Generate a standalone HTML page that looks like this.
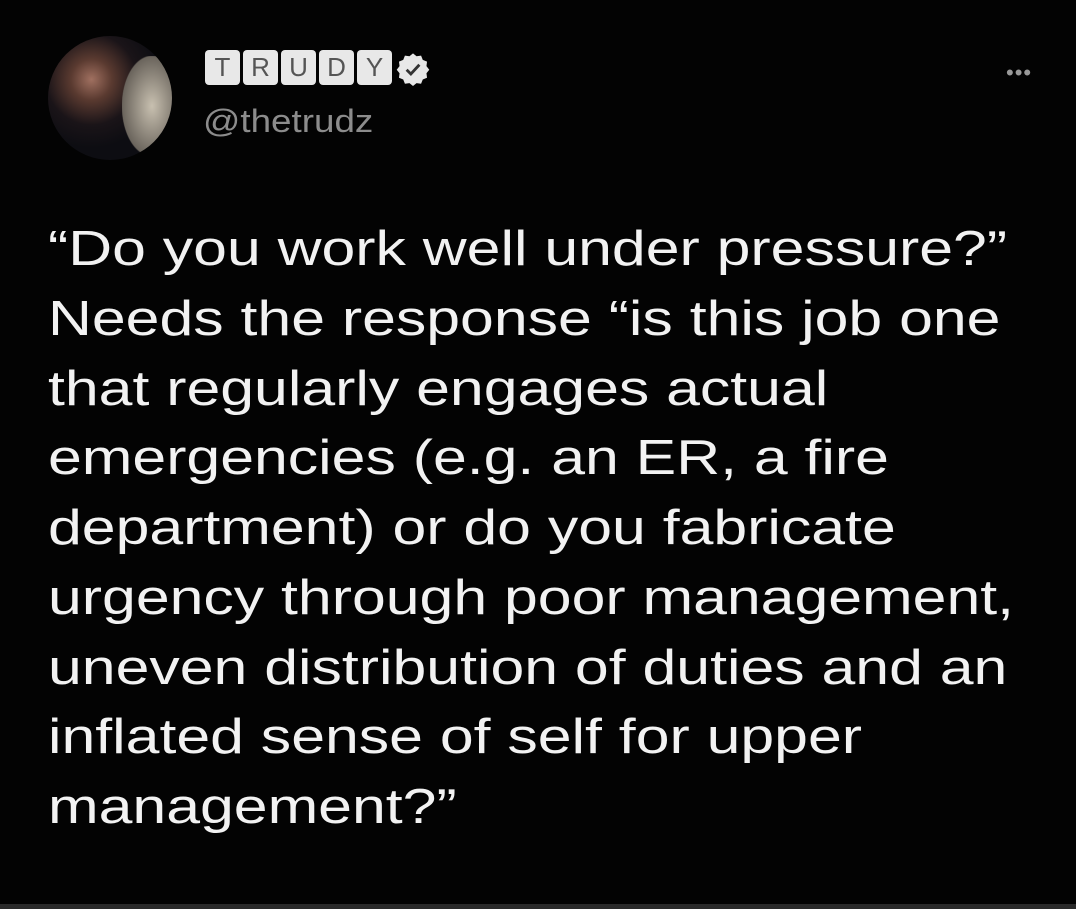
<!DOCTYPE html>
<html><head><meta charset="utf-8"><style>
body{margin:0;width:1076px;height:909px;background:#030303;position:relative;overflow:hidden;font-family:"Liberation Sans",Arial,sans-serif;}
.av{position:absolute;left:48px;top:36px;width:124px;height:124px;border-radius:50%;background:radial-gradient(circle at 35% 35%,#a07060 0,#5a3a30 18%,#1a1418 40%,#0d0d12 60%),#111;overflow:hidden}
.av:after{content:"";position:absolute;right:-10px;top:20px;width:60px;height:100px;background:radial-gradient(#c8c0b0,#6a645c 70%,transparent 72%)}
.box{position:absolute;top:50px;width:35px;height:35px;background:#e8e8e8;border-radius:4px;color:#555;font-size:26px;text-align:center;line-height:35px}
.h{position:absolute;left:203px;top:103px;color:#8c8c8c;font-size:32px;transform:scaleX(1.15);transform-origin:0 0}
.t{position:absolute;left:48px;top:215px;color:#f2f2f2;font-size:49px;line-height:69.75px;white-space:pre;transform:scaleX(1.24);transform-origin:0 0}
.dots{position:absolute;left:1006px;top:60px;color:#999;font-size:22px;letter-spacing:1px}
.bar{position:absolute;left:0;top:904px;width:1076px;height:5px;background:#2a2a2a}
</style></head><body>
<div class="av"></div>
<div class="box" style="left:205px">T</div>
<div class="box" style="left:243px">R</div>
<div class="box" style="left:281px">U</div>
<div class="box" style="left:319px">D</div>
<div class="box" style="left:357px">Y</div>
<svg style="position:absolute;left:396px;top:52px" width="34" height="34" viewBox="0 0 24 24"><path d="M12 1l2.5 2 3.2-.4 1.2 3 3 1.2-.4 3.2 2 2.5-2 2.5.4 3.2-3 1.2-1.2 3-3.2-.4-2.5 2-2.5-2-3.2.4-1.2-3-3-1.2.4-3.2-2-2.5 2-2.5-.4-3.2 3-1.2 1.2-3 3.2.4z" fill="#e8e8e8"/><path d="M7.5 12.5l3 3 6-6.5" stroke="#333" stroke-width="2" fill="none"/></svg>
<div class="h">@thetrudz</div>
<div class="dots">•••</div>
<div class="t">“Do you work well under pressure?”
Needs the response “is this job one
that regularly engages actual
emergencies (e.g. an ER, a fire
department) or do you fabricate
urgency through poor management,
uneven distribution of duties and an
inflated sense of self for upper
management?”</div>
<div class="bar"></div>
</body></html>
